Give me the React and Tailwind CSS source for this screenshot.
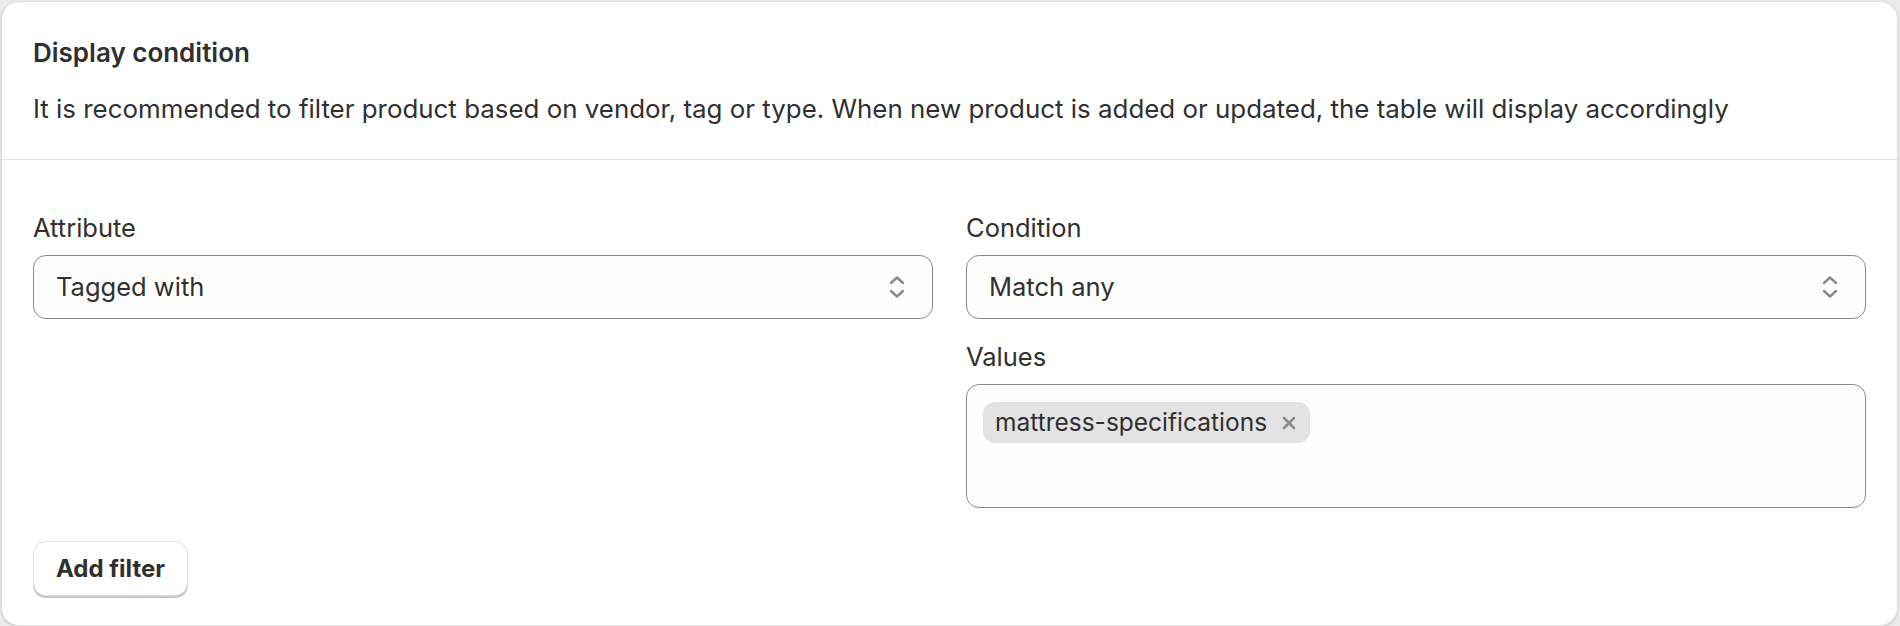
import { X } from 'lucide-react';

const font = { fontFamily: 'Inter, "Noto Sans", sans-serif' };

function SelectArrows() {
  return (
    <svg width="22" height="30" viewBox="0 0 22 30" fill="none" stroke="#8a8a8a" strokeWidth="2.4" strokeLinecap="round" strokeLinejoin="round">
      <path d="M5 11l6-5.5 6 5.5" />
      <path d="M5 19l6 5.5 6-5.5" />
    </svg>
  );
}

function Select({ value }) {
  return (
    <div className="flex h-[64px] items-center justify-between rounded-[13px] border-[1.5px] border-[#8a8a8a] bg-[#fdfdfd] pl-[22px] pr-[24px]">
      <span className="text-[25.5px] text-[#303030]">{value}</span>
      <SelectArrows />
    </div>
  );
}

export default function App() {
  return (
    <div className="h-[626px] bg-[#ebebeb] pt-[1px] pl-[1px] pr-[2px]" style={font}>
      <div className="h-full overflow-hidden rounded-[18px] border border-[#dedede] bg-white shadow-[0_1px_2px_rgba(0,0,0,0.15)]">
        {/* header */}
        <div className="px-[31px] pt-[36px] pb-[34px]">
          <h2 className="text-[26px] font-semibold leading-[30px] text-[#303030]">Display condition</h2>
          <p className="mt-[25px] text-[25.9px] leading-[32px] text-[#303030]">
            It is recommended to filter product based on vendor, tag or type. When new product is added or updated, the table will display accordingly
          </p>
        </div>
        <div className="h-px bg-[#e3e3e3]" />

        {/* filters */}
        <div className="px-[31px] pt-[53px]">
          <div className="grid grid-cols-2 gap-x-[33px]">
            <div>
              <label className="block text-[25.5px] leading-[30px] text-[#303030]">Attribute</label>
              <div className="mt-[12px]">
                <Select value="Tagged with" />
              </div>
            </div>
            <div>
              <label className="block text-[25.5px] leading-[30px] text-[#303030]">Condition</label>
              <div className="mt-[12px]">
                <Select value="Match any" />
              </div>
              <label className="mt-[23px] block text-[25.5px] leading-[30px] text-[#303030]">Values</label>
              <div className="mt-[12px] h-[124px] rounded-[13px] border-[1.5px] border-[#8a8a8a] bg-[#fdfdfd] px-[16px] pt-[17px]">
                <span className="inline-flex h-[41px] items-center gap-[12px] rounded-[12px] bg-[#e3e3e3] pl-[12px] pr-[11px]">
                  <span className="text-[24.5px] text-[#303030]">mattress-specifications</span>
                  <X className="h-[20px] w-[20px] text-[#8a8a8a]" strokeWidth={3} />
                </span>
              </div>
            </div>
          </div>

          <button className="mt-[33px] h-[55px] rounded-[13px] border border-[#e0e0e0] bg-white px-[22px] text-[24px] font-bold text-[#303030] shadow-[0_2px_0_#c4c4c4]">
            Add filter
          </button>
        </div>
      </div>
    </div>
  );
}
